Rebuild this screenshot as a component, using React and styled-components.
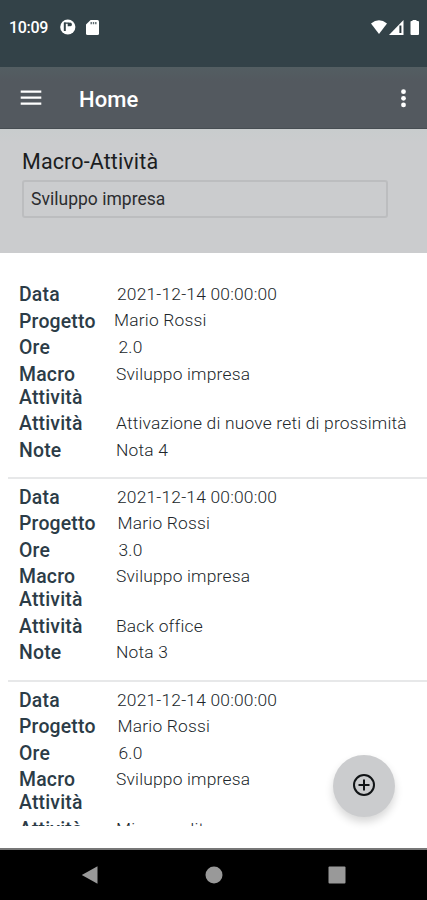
import React from "react";
import styled, { createGlobalStyle } from "styled-components";

const GlobalStyle = createGlobalStyle`
  * { box-sizing: border-box; }
  body { margin: 0; background: #fff; }
`;

const Screen = styled.div`
  position: relative;
  display: flex;
  flex-direction: column;
  width: 427px;
  height: 900px;
  overflow: hidden;
  background: #fff;
  font-family: Roboto, sans-serif;
`;

const StatusBar = styled.header`
  display: flex;
  align-items: center;
  flex: 0 0 67px;
  padding: 0 7px 13px 9px;
  background: #334248;
  color: #fff;
`;

const Clock = styled.span`
  width: 51px;
  padding-top: 1px;
  font-size: 16px;
  font-weight: 500;
  letter-spacing: -0.3px;
  white-space: nowrap;
`;

const StatusIcons = styled.div`
  display: flex;
  align-items: center;
  gap: ${(p) => p.$gap}px;
  margin-left: ${(p) => (p.$end ? "auto" : "0")};
  svg { display: block; }
`;

const AppBar = styled.nav`
  display: flex;
  align-items: center;
  flex: 0 0 62px;
  padding: 1px 18px 0 20px;
  background: linear-gradient(#535e62, #53595f 14px);
  border-bottom: 1px solid #464d52;
  color: #fff;
`;

const IconButton = styled.button`
  display: flex;
  padding: 0;
  border: 0;
  background: none;
  color: inherit;
`;

const Title = styled.h1`
  flex: 1;
  margin: 3px 0 0 37px;
  font-size: 22px;
  font-weight: 500;
  line-height: 26px;
  letter-spacing: 0.1px;
`;

const FilterPanel = styled.section`
  flex: 0 0 124px;
  padding: 19px 39px 0 22px;
  background: linear-gradient(#c8cccd, #cbccce 14px);
`;

const FilterLabel = styled.label`
  display: block;
  height: 32px;
  font-size: 21.5px;
  line-height: 28px;
  letter-spacing: 0.12px;
  color: #1b1d1f;
`;

const FilterField = styled.div`
  height: 38px;
  padding: 0 7px;
  border: 2px solid #bcbdbf;
  border-radius: 3px;
  font-size: 17.5px;
  line-height: 35px;
  letter-spacing: 0.02px;
  color: #2b2d2f;
`;

const List = styled.main`
  flex: 0 0 573px;
  padding: 23px 0 0 8px;
  overflow: hidden;
`;

const Record = styled.article`
  display: grid;
  grid-template-columns: 106.5px 1fr;
  row-gap: 3.5px;
  height: 202.8px;
  padding: 7.2px 0 0 11px;
  align-content: start;
  border-bottom: 2px solid #e7e8e9;
`;

const Label = styled.div`
  width: 90px;
  font-size: 19.4px;
  font-weight: 500;
  line-height: 23px;
  letter-spacing: 0.2px;
  color: #2c3c47;
`;

const Value = styled.div`
  margin-left: -10px;
  padding-left: ${(p) => p.$indent}px;
  height: 23px;
  font-size: 17.4px;
  font-weight: 300;
  line-height: 23.4px;
  letter-spacing: 0.19px;
  white-space: nowrap;
  color: #20262a;
`;

const ProjectValue = styled(Value)`
  margin-left: ${(p) => (p.$first ? -12.5 : -9)}px;
  margin-top: ${(p) => (p.$first ? -1 : 0)}px;
`;

const Fab = styled.button`
  position: absolute;
  left: 333px;
  top: 755px;
  display: flex;
  align-items: center;
  justify-content: center;
  width: 62px;
  height: 62px;
  padding: 0 0 2px;
  border: 0;
  border-radius: 50%;
  background: #cbccce;
  box-shadow: 0 5px 8px rgba(0, 0, 0, 0.16);
`;

const NavBar = styled.footer`
  display: flex;
  align-items: center;
  justify-content: space-between;
  height: 52px;
  margin-top: auto;
  padding: 0 81px 1px;
  border-top: 2px solid #777;
  background: #000;
  svg { display: block; }
`;

const records = [
  { project: "Mario Rossi", hours: "2.0", activity: "Attivazione di nuove reti di prossimità", note: "Nota 4" },
  { project: "Mario Rossi", hours: "3.0", activity: "Back office", note: "Nota 3" },
  { project: "Mario Rossi", hours: "6.0", activity: "Microcredito" },
];

function Entry({ record, first }) {
  return (
    <Record>
      <Label>Data</Label>
      <Value $indent={1.5}>2021-12-14 00:00:00</Value>
      <Label>Progetto</Label>
      <ProjectValue $first={first} $indent={1}>{record.project}</ProjectValue>
      <Label>Ore</Label>
      <Value $indent={3}>{record.hours}</Value>
      <Label>Macro Attività</Label>
      <Value $indent={0.5}>Sviluppo impresa</Value>
      <Label>Attività</Label>
      <Value $indent={0.5}>{record.activity}</Value>
      {record.note && (
        <>
          <Label>Note</Label>
          <Value $indent={0.5}>{record.note}</Value>
        </>
      )}
    </Record>
  );
}

export default function App() {
  return (
    <Screen>
      <GlobalStyle />
      <StatusBar>
        <Clock>10:09</Clock>
        <StatusIcons $gap={10}>
          <svg width="16" height="16" viewBox="0 0 16 16">
            <circle cx="7.8" cy="8" r="7.6" fill="#fff" />
            <path d="M4.8 3.6v8.4" fill="none" stroke="#334248" strokeWidth="2" />
            <path d="M4 4.1h4.4v3.2" fill="none" stroke="#334248" strokeWidth="1.4" />
            <circle cx="10" cy="5.4" r="1.9" fill="#334248" />
          </svg>
          <svg width="13" height="15" viewBox="0 0 13 15">
            <path d="M4.6 0H11.5Q13 0 13 1.5V13.5Q13 15 11.5 15H1.5Q0 15 0 13.5V4.6Z" fill="#fff" />
            <path d="M5.2 2v2.2M7.5 2v2.2M9.8 2v2.2" stroke="#5d6a70" strokeWidth="1.4" />
          </svg>
        </StatusIcons>
        <StatusIcons $end $gap={2}>
          <svg width="16" height="14" viewBox="0 0 16 14">
            <path d="M0 3.5Q8-3 16 3.5L8 14Z" fill="#fff" />
          </svg>
          <svg width="15" height="15" viewBox="0 0 15 15">
            <path d="M0 15L14.5 0V15Z" fill="#fff" />
            <path d="M11.4 5.5V13" stroke="#26343a" strokeWidth="2" />
          </svg>
          <svg width="14" height="15" viewBox="0 0 14 15">
            <path d="M4.5 1.8Q4.5 1 5.5 1H6.5V0h4v1H12Q13 1 13 2v12q0 1-1 1H5.5q-1 0-1-1Z" fill="#fff" />
          </svg>
        </StatusIcons>
      </StatusBar>
      <AppBar>
        <IconButton aria-label="Menu">
          <svg width="22" height="18" viewBox="0 0 22 18">
            <path d="M.7 2.7h20.6M.7 8.7h20.6M.7 14.7h20.6" stroke="#fff" strokeWidth="2.2" />
          </svg>
        </IconButton>
        <Title>Home</Title>
        <IconButton aria-label="More">
          <svg width="10" height="20" viewBox="0 0 10 20">
            <g fill="#fff">
              <circle cx="4.5" cy="3.7" r="2.4" />
              <circle cx="4.5" cy="10.3" r="2.4" />
              <circle cx="4.5" cy="16.9" r="2.4" />
            </g>
          </svg>
        </IconButton>
      </AppBar>
      <FilterPanel>
        <FilterLabel>Macro-Attività</FilterLabel>
        <FilterField>Sviluppo impresa</FilterField>
      </FilterPanel>
      <List>
        {records.map((record, i) => (
          <Entry key={i} record={record} first={i === 0} />
        ))}
      </List>
      <Fab aria-label="Add">
        <svg width="24" height="24" viewBox="0 0 24 24" fill="none" stroke="#111416">
          <circle cx="12" cy="12" r="10" strokeWidth="2" />
          <path d="M12 6.5v11M6.5 12h11" strokeWidth="2" />
        </svg>
      </Fab>
      <NavBar>
        <svg width="18" height="20" viewBox="0 0 18 20">
          <path d="M.8 10L16.5 1.2V18.8Z" fill="#999" />
        </svg>
        <svg width="18" height="18" viewBox="0 0 18 18">
          <circle cx="9" cy="9" r="8.5" fill="#999" />
        </svg>
        <svg width="18" height="18" viewBox="0 0 18 18">
          <rect x=".5" y=".5" width="17" height="17" rx="1" fill="#999" />
        </svg>
      </NavBar>
    </Screen>
  );
}
